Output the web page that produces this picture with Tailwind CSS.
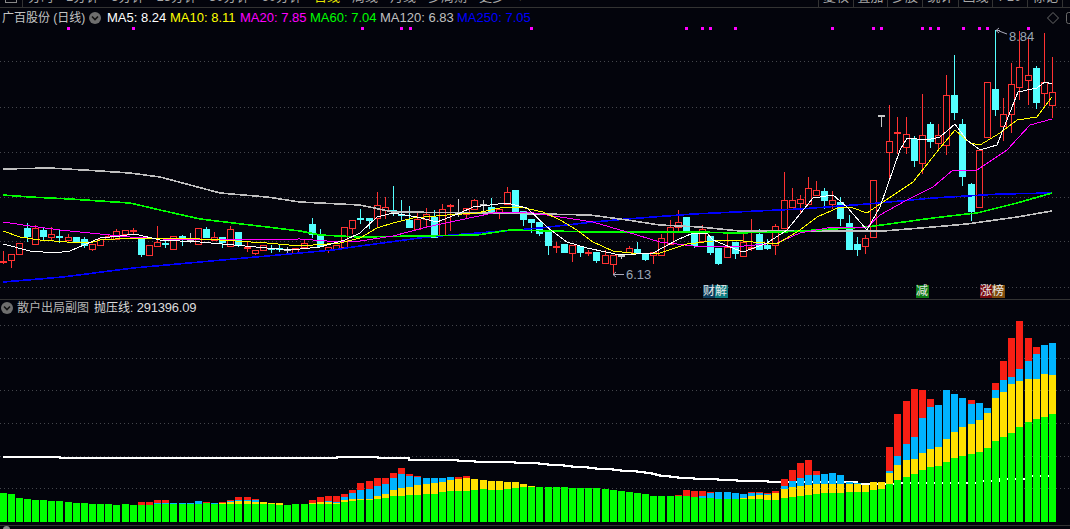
<!DOCTYPE html>
<html lang="zh">
<head>
  <meta charset="UTF-8">
  <title>广百股份 (日线)</title>
  <script src="https://cdn.jsdelivr.net/npm/@tailwindcss/browser@4"></script>
</head>
<body class="bg-[#03040c] overflow-hidden [font-family:'Liberation_Sans','Noto_Sans_CJK_SC',sans-serif]">
<div class="w-[1070px] h-[529px] flex flex-col overflow-hidden">

  <!-- toolbar, cut off by the window top -->
  <div class="h-[8px] shrink-0 flex justify-between border-b border-[#333] overflow-hidden text-[13px] leading-[14px] text-[#a8a8a8]">
    <div class="flex">
      <div class="w-[23px] h-[7px] border-r border-[#333] pl-[5px]">
        <div class="w-[12px] h-[3px] border-x border-b border-[#888]"></div>
      </div>
      <div class="flex items-end gap-[12px] pl-[5px] pb-[3px] whitespace-nowrap">
        <span>分时</span><span>1分钟</span><span>5分钟</span><span>15分钟</span><span>30分钟</span><span>60分钟</span>
        <span class="text-[#e6e600]">日线</span><span>周线</span><span>月线</span><span>多周期</span><span>更多</span><span>▾</span>
      </div>
    </div>
    <div class="flex mr-[7px]">
      <div class="w-[35px] flex items-end justify-center pb-[3px] border-l border-[#333]">复权</div>
      <div class="w-[34px] flex items-end justify-center pb-[3px] border-l border-[#333]">叠加</div>
      <div class="w-[35px] flex items-end justify-center pb-[3px] border-l border-[#333]">多股</div>
      <div class="w-[36px] flex items-end justify-center pb-[3px] border-l border-[#333]">统计</div>
      <div class="w-[34px] flex items-end justify-center pb-[3px] border-l border-[#333]">画线</div>
      <div class="w-[35px] flex items-end justify-center pb-[3px] border-l border-[#333]">F10</div>
      <div class="w-[36px] flex items-end justify-center pb-[3px] border-x border-[#333]">标记</div>
    </div>
  </div>

  <!-- main chart -->
  <div class="relative h-[292px] shrink-0 border-b border-[#333]">
    <svg id="main" class="block" width="1070" height="291" viewBox="0 8 1070 291"></svg>

    <div class="absolute left-[2px] top-[2px] flex items-center h-[15px] text-[13px] leading-none whitespace-nowrap">
      <span class="w-[87px] text-[12px] text-[#c4c4c4]">广百股份 (日线)</span>
      <span class="w-[12px] h-[12px] mr-[6px] rounded-full bg-[#6e6e6e] flex items-center justify-center">
        <svg width="8" height="6" viewBox="0 0 8 6"><path d="M1 1.5 4 4.5 7 1.5" fill="none" stroke="#111" stroke-width="1.6"/></svg>
      </span>
      <span class="w-[63px] text-white">MA5: 8.24</span>
      <span class="w-[70px] text-[#ffff00]">MA10: 8.11</span>
      <span class="w-[70px] text-[#ff00ff]">MA20: 7.85</span>
      <span class="w-[70px] text-[#00ff00]">MA60: 7.04</span>
      <span class="w-[77px] text-[#c0c0c0]">MA120: 6.83</span>
      <span class="text-[#0000ff]">MA250: 7.05</span>
    </div>

    <svg class="absolute left-[1047px] top-[4px]" width="23" height="12" viewBox="0 0 23 12">
      <path d="M6 .5 11.5 6 6 11.5 .5 6Z" fill="none" stroke="#6a6a6a"/>
      <rect x="19.5" y=".5" width="8" height="11" rx="2" fill="none" stroke="#6a6a6a"/>
    </svg>

    <span class="absolute left-[1009px] top-[21px] text-[13px] leading-[15px] text-[#9aa6b4]">8.84</span>
    <span class="absolute left-[626px] top-[259px] text-[13px] leading-[15px] text-[#9aa6b4]">6.13</span>

    <div class="absolute left-[703px] top-[277px] flex text-[12px] leading-[13px] text-[#e8e8e8]">
      <span class="w-[12px] h-[13px] bg-[#0b3b5c]">财</span><span class="w-[13px] h-[13px] bg-[#0b7b80]">解</span>
    </div>
    <span class="absolute left-[916px] top-[277px] w-[13px] h-[13px] bg-[#0b7a14] text-[12px] leading-[13px] text-[#e8e8e8]">减</span>
    <div class="absolute left-[980px] top-[277px] flex text-[12px] leading-[13px] text-[#e8e8e8]">
      <span class="w-[12px] h-[13px] bg-[#7a0b10]">涨</span><span class="w-[13px] h-[13px] bg-[#7d4a0b]">榜</span>
    </div>
  </div>

  <!-- sub chart -->
  <div class="relative h-[226px] shrink-0 border-b border-[#333]">
    <svg id="sub" class="block" width="1070" height="225" viewBox="0 300 1070 225"></svg>
    <div class="absolute left-[1px] top-[0px] flex items-center h-[15px] text-[12px] leading-none whitespace-nowrap">
      <span class="w-[12px] h-[12px] mr-[4px] rounded-full bg-[#6e6e6e] flex items-center justify-center">
        <svg width="8" height="6" viewBox="0 0 8 6"><path d="M1 1.5 4 4.5 7 1.5" fill="none" stroke="#111" stroke-width="1.6"/></svg>
      </span>
      <span class="w-[77px] text-[#b4b4b4]">散户出局副图</span>
      <span class="text-[#dcdcdc]">抛压线: <span class="text-[13px] tracking-[-0.2px]">291396.09</span></span>
    </div>
  </div>

  <div class="h-[3px] overflow-hidden pl-[3px]">
    <div class="w-[7px] h-[7px] rounded-full bg-[#888]"></div>
  </div>
</div>

<script>
  const barX = (i) => Math.floor(0.05 + i * 8.135);
  const grid = (ys, color) => ys.map((y) => `<line x1="0" x2="1070" y1="${y + 0.5}" y2="${y + 0.5}" stroke="${color}" stroke-dasharray="1 3"/>`).join('');
  const line = (pts, color, w) => `<polyline points="${pts}" fill="none" stroke="${color}" stroke-width="${w}" shape-rendering="crispEdges"/>`;

  // type, high, body top, body bottom, low
  const candles = [
    'r,251,261,261,263','r,254,254,260,267','r,243,243,254,254','c,223,228,236,241','r,225,228,244,244','c,228,230,236,239','r,227,234,237,239','c,230,236,236,242','r,234,237,240,240','c,237,237,241,241',
    'c,237,239,245,247','r,244,244,249,250','r,239,239,245,245','r,234,236,239,239','r,229,231,239,239','r,230,230,234,234','r,228,230,230,234','c,238,238,254,256','r,245,245,255,255','r,226,242,246,246',
    'c,241,243,243,247','r,236,236,249,249','c,235,236,238,245','w,233,240,240,242','r,228,228,244,244','c,227,229,237,237','r,232,237,240,240','c,237,237,242,247','r,226,229,246,246','c,232,232,245,246',
    'r,242,247,247,251','r,250,250,253,254','r,245,245,250,250','c,245,248,248,252','c,245,248,248,251','w,247,249,249,252','r,248,248,253,253','r,239,243,247,247','c,218,224,234,237','c,229,235,246,246',
    'r,247,247,250,252','r,245,245,249,249','r,227,227,247,247','r,220,220,228,233','c,209,218,218,223','c,218,218,220,228','r,192,205,218,227','r,197,207,210,218','c,186,210,210,215','c,200,214,214,220',
    'c,206,220,227,227','r,212,219,229,229','r,208,214,219,226','c,210,217,237,237','r,204,209,235,236','r,204,205,205,230','w,199,212,212,216','r,208,208,214,218','r,199,200,209,209','w,200,204,204,210',
    'c,198,207,211,211','r,209,209,213,218','r,187,192,204,204','c,190,190,211,211','c,211,211,219,225','c,219,219,222,232','c,222,222,233,235','c,232,232,245,254','r,242,246,246,252','c,244,244,252,252',
    'r,245,245,253,261','c,246,246,252,256','r,250,252,252,255','c,252,252,260,262','r,250,255,263,263','r,255,255,264,274','w,254,255,255,258','r,246,248,252,252','c,242,249,253,253','c,254,254,259,260',
    'r,252,252,255,263','r,234,238,255,255','r,220,227,244,244','r,210,222,227,232','c,217,217,231,231','c,233,233,245,247','r,225,229,241,241','c,236,236,252,254','c,248,248,263,264','r,232,247,257,257',
    'c,242,242,253,258','r,232,242,256,256','r,219,247,247,250','c,229,234,249,249','c,239,245,248,249','r,224,226,245,254','r,172,200,228,228','r,188,200,207,207','r,195,199,203,212','r,177,188,204,204',
    'r,181,190,195,195','c,188,191,200,208','r,191,200,204,208','c,197,202,218,225','c,215,223,249,249','c,237,244,249,255','r,235,238,246,253','r,180,180,237,237','w,115,115,115,126','r,105,141,152,180',
    'r,117,132,132,153','r,117,134,147,153','c,136,139,160,166','r,94,135,163,173','c,122,124,141,147','r,124,135,143,150','r,75,95,145,154','c,55,95,112,119','c,119,124,176,185','c,183,184,211,220',
    'r,150,150,207,207','r,82,82,137,137','c,30,89,109,115','r,98,114,126,140','r,63,84,114,132','r,31,67,87,99','r,37,75,80,104','c,66,68,102,108','r,33,82,93,106','r,57,92,105,117'
  ];

  const candleSvg = candles.map((row, i) => {
    const [type, hi, top, bot, lo] = row.split(',');
    const [h, t, b, l] = [hi, top, bot, lo].map(Number);
    const x = barX(i);
    const color = type === 'r' ? '#ff3232' : type === 'c' ? '#54ffff' : '#c8c8c8';
    const wick = `<rect x="${x + 3}" y="${h}" width="1" height="${l - h + 1}" fill="${color}"/>`;
    if (t === b) return wick + `<rect x="${x}" y="${t}" width="7" height="2" fill="${color}"/>`;
    if (type === 'c') return wick + `<rect x="${x}" y="${t}" width="7" height="${b - t + 1}" fill="${color}"/>`;
    return wick + `<rect x="${x + 0.5}" y="${t + 0.5}" width="6" height="${b - t}" fill="#03040c" stroke="${color}"/>`;
  }).join('');

  const ma250 = '3,282 63,277 133,268 200,262 267,256 333,250 360,246 427,237 503,231 540,228 593,222 627,219 693,214 800,209 867,204 933,198 1000,194 1052,193';
  const ma120 = '3,169 50,168 100,171 130,173 160,177 190,185 220,193 267,197 300,202 360,205 393,212 493,213 590,215 627,220 660,225 700,227 740,231 883,231 933,227 967,224 1017,217 1052,211';
  const ma60 = '3,195 30,197 70,199 100,201 130,203 160,210 200,219 267,227 300,231 320,235 360,237 477,235 510,230 593,232 700,232 733,233 783,232 867,227 933,218 967,214 977,213 1017,203 1052,193';
  const ma20 = '3,222 30,226 60,230 100,234 130,237 180,240 300,239 340,242 360,241 393,236 427,227 460,220 493,213 527,212 560,217 593,222 627,232 660,242 693,246 733,247 777,243 800,233 833,227 867,227 880,215 907,200 933,187 953,170 977,170 1007,150 1030,125 1052,119';
  const ma10 = '3,231 20,237 40,240 67,242 90,243 100,240 130,238 180,238 220,240 267,243 300,246 340,243 360,238 377,228 393,223 413,218 447,215 477,213 500,208 520,207 543,212 560,220 577,230 593,242 613,251 640,254 660,253 687,244 713,241 733,240 753,242 777,244 800,230 817,217 840,207 853,208 867,213 883,202 913,182 940,148 955,130 970,143 980,145 1000,133 1017,120 1037,117 1052,97';
  const ma5 = '3,244 30,251 55,253 70,251 100,238 120,236 135,234 160,240 200,242 267,248 290,250 320,247 345,240 360,233 377,217 393,213 417,217 437,222 460,213 473,207 507,203 527,208 547,227 567,242 587,248 620,255 653,253 677,240 693,233 707,233 713,240 730,247 743,252 767,243 787,230 813,198 833,195 847,207 867,230 880,207 900,150 907,138 927,140 940,137 955,124 967,140 980,150 997,145 1018,92 1037,88 1045,82 1052,84';

  const marks = [67, 132, 361, 400, 409, 530, 685, 701, 709, 734, 831, 872, 880, 921, 929, 937, 962, 978, 986, 1027]
    .map((x) => `<rect x="${x}" y="27" width="3" height="3" fill="#ff00ff"/>`).join('');

  document.getElementById('main').innerHTML =
    grid([61, 107, 152, 197, 241, 287], '#44464c') +
    `<g shape-rendering="crispEdges">${marks}${candleSvg}</g>` +
    line(ma250, '#0000ff', 1.6) + line(ma120, '#c0c0c0', 1.6) + line(ma60, '#00ff00', 1.6) +
    line(ma20, '#ff00ff', 1) + line(ma10, '#ffff00', 1) + line(ma5, '#ffffff', 1) +
    `<path d="M996 30.5H1000M996 30.5 999 28M996 30.5 999 33M999 31 1007 34" fill="none" stroke="#aab"/>` +
    `<path d="M613 274.5H624M613 274.5 616 272M613 274.5 616 277" fill="none" stroke="#aab"/>`;

  // bar tops in zoomed px: green, yellow, blue, red (0 = no segment)
  const partA = [
    [594],[597],[609],[612],[615],[615],[618],[618],[621],[624],[624],[627],[627],[627],[630],[627],[630],[630,0,0,621],[630,0,0,621],[627,0,624,615],
    [627,0,624,615],[627,0,624],[627,0,624],[627,0,624],[627,0,618],[624,0,0,621],[627,0,624],[627,624,0,621],[627,621,618,615],[627,618,615,606],[627,618,615,606],[627,621,615,612],[627,621],[627,624],[630,624],[630],[627,627],[627],[627,624,0,615],[627,621,0,606],
    [627,621,618,603],[627,624,621,603]
  ].map((b) => b.map((v) => v && 295 + v / 3));
  const partB = [
    [186,180,171,162],[183,177,159,150],[180,177,150,129],[180,177,147,123],[177,168,138,114],[174,162,132,114],[168,150,114,99],[168,144,102,84],[165,141,108,102],[165,135,111,108],
    [162,132,114],[162,129,114],[156,126,114],[153,120,111],[153,117,0,111],[153,114,0,108],[150,117],[147,120],[150,123],[150,123],
    [147,126],[144,126],[141,132],[141,138],[141],[141],[141],[141],[144],[144],[144],[144],[147],[150],[153],[156],[159],[162],[168],[168],[168],[168,0,0,165],
    [168,0,0,150],[171,0,0,153],[174,0,168,153],[174,0,159,156],[177,0,156],[177,0,156],[177,0,159]
  ].map((b) => b.map((v) => v && 440 + v / 3));
  const partC = [
    [567,564,552],[567,558,549,546],[567,555,549,546],[570,555,552,549],[570,549,0,543],[564,537,528,507],[561,531,513,480],[558,528,504,459],[555,525,495,450],[552,522,495,483],
    [549,522,492],[549,522,489],[549,522,495],[546,522,516],[546,522,519],[546,525],[540,516],[537,516],[522,489,483,411],[510,465,438,312],
    [501,450,402,273],[492,447,381,237],[480,429,324,240],[471,417,291,267],[468,411,285],[456,387,240],[444,366,252],[438,351,264],[432,342,282,270],[426,330,279],
    [414,309,294],[393,264,240,219],[381,246,210,153],[369,222,201,84],[351,213,177,33],[336,207,153,84],[327,207,132,111],[321,192,105],[312,195,99]
  ].map((b) => b.map((v) => v && 310 + v / 3));
  const bars = [...partA, ...partB, ...partC];

  const colors = ['#00ff00', '#ffe000', '#00b4ff', '#f81e14'];
  const barSvg = bars.map((tops, i) => {
    let prev = 522;
    return tops.map((top, k) => {
      if (!top) return '';
      const r = `<rect x="${barX(i)}" y="${top}" width="7" height="${prev - top}" fill="${colors[k]}"/>`;
      prev = top;
      return r;
    }).join('');
  }).join('');

  // pressure line, stepping down and then climbing again behind the bars
  const steps = [[3,457],[60,458],[337,457],[378,458],[409,460],[458,461],[475,462],[515,463],[539,464],[548,465],[564,466],[572,467],[588,468],[596,469],[613,470],[621,471],[637,472],[645,473],[652,474],[656,475],[660,476],[670,477],[678,478],[694,479],[718,480],[737,481],[768,482],[857,484],[900,483],[980,481],[1000,479],[1030,476],[1052,474]];
  const pressure = steps.map(([x, y], i) => {
    const next = steps[i + 1];
    return next ? `${x},${y} ${next[0]},${y}` : `${x},${y}`;
  }).join(' ');

  document.getElementById('sub').innerHTML =
    grid([325, 358, 390, 423, 456, 488], '#44464c') +
    line(pressure, '#ffffff', 2) +
    `<g shape-rendering="crispEdges">${barSvg}</g>`;
</script>
</body>
</html>
